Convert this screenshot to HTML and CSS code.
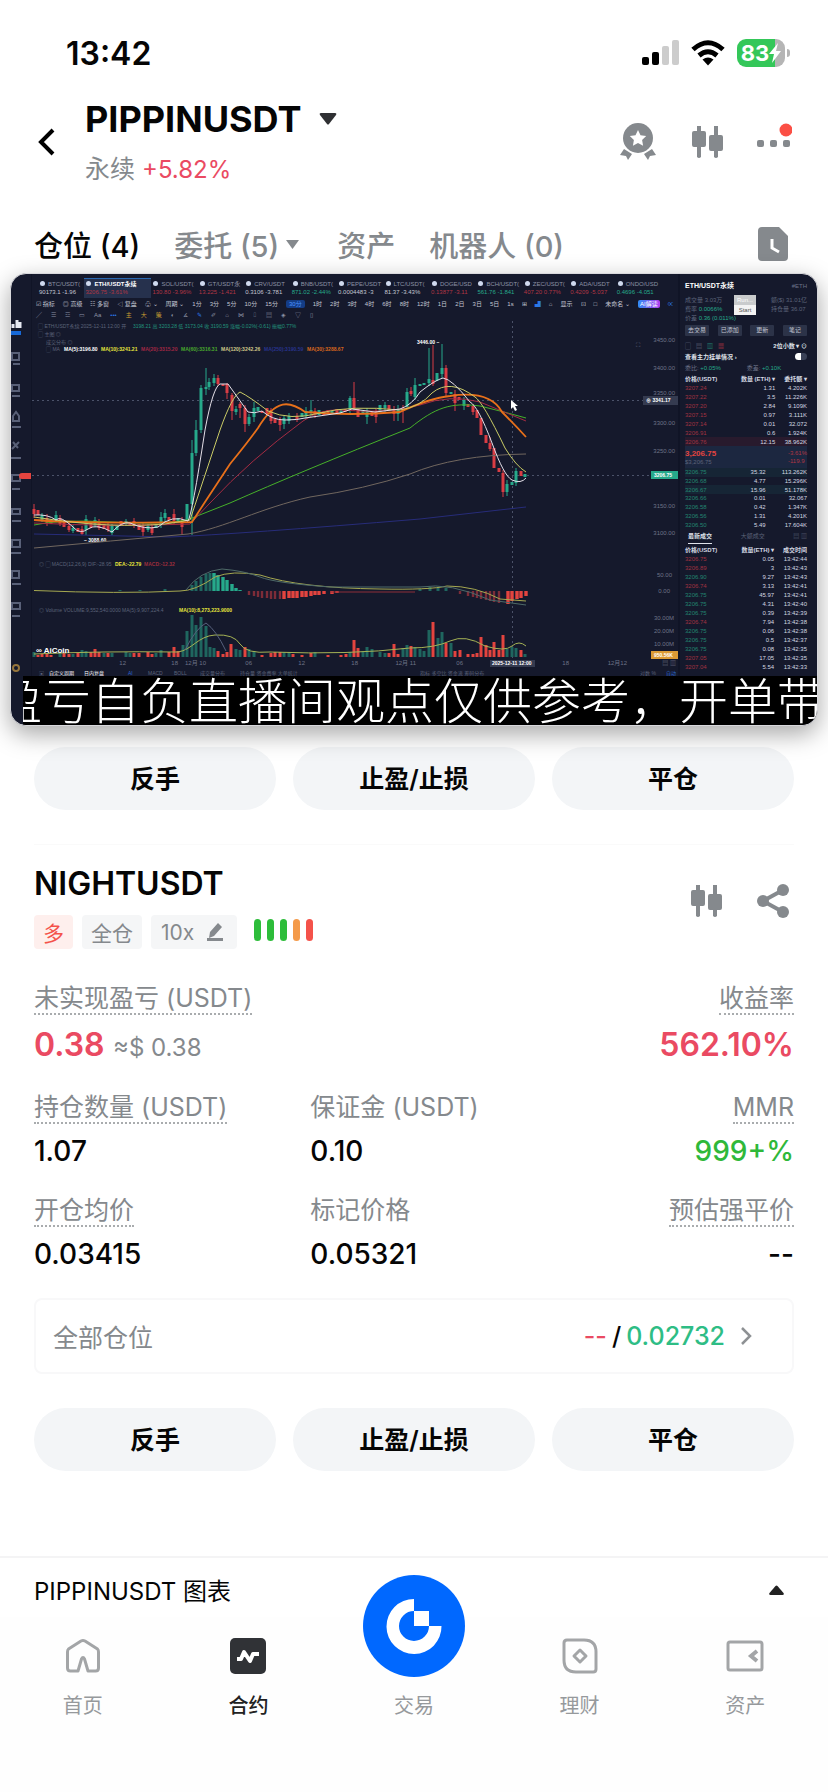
FILE: index.html
```html
<!DOCTYPE html>
<html lang="zh-CN">

<head>
    <meta charset="UTF-8">
    <meta name="viewport" content="width=device-width, initial-scale=1.0">
    <title>PIPPINUSDT</title>
    <link rel="stylesheet" href="styles.css">
</head>

<body>
    <svg class="defs" aria-hidden="true">
        <symbol id="candles" viewBox="0 0 36 36">
            <path d="M9 2h4v5h3q2 0 2 2v12q0 2-2 2h-3v10q-2 2-4 0V23H6q-2 0-2-2V9q0-2 2-2h3zM26 2h4v9h3q2 0 2 2v12q0 2-2 2h-3v6q-2 2-4 0v-6h-3q-2 0-2-2V13q0-2 2-2h3z" fill="#85898d" />
        </symbol>
    </svg>
    <div class="app">
        <div class="status">
            <span class="time">13:42</span>
            <div class="status-icons">
                <svg width="37" height="26" viewBox="0 0 37 26">
                    <rect x="0" y="17" width="7" height="8" rx="2" />
                    <rect x="10" y="12" width="7" height="13" rx="2" />
                    <rect x="20" y="6" width="7" height="19" rx="2" fill="#ccc" />
                    <rect x="30" y="0" width="7" height="25" rx="2" fill="#ccc" />
                </svg>
                <svg width="34" height="26" viewBox="0 0 34 26">
                    <path d="M2 9.500Q17-4 32 9.500M8 15.500Q17 8 26 15.500" fill="none" stroke="#000" stroke-width="5" />
                    <path d="M11.500 19.500Q17 15.500 22.500 19.500L17 25.500z" />
                </svg>
                <div class="battery">
                    <span>83</span>
                    <svg width="12" height="20" viewBox="0 0 12 20">
                        <path d="M9 0L0 11h5L3 20l9-12H7z" fill="#fff" />
                    </svg>
                </div>
            </div>
        </div>

        <header class="header">
            <button type="button" class="icon-btn" aria-label="返回">
                <svg width="20" height="30" viewBox="0 0 20 30">
                    <path d="M17 3L5 15l12 12" fill="none" stroke="#000" stroke-width="4" />
                </svg>
            </button>
            <div class="pair">
                <button type="button" class="pair-name">PIPPINUSDT
                    <svg width="18" height="12" viewBox="0 0 18 12">
                        <path d="M2 0h14q2 0 1 2l-7 9q-1 1-2 0L1 2Q0 0 2 0z" fill="#2f3033" />
                    </svg>
                </button>
                <p class="pair-sub">永续 <span class="red">+5.82%</span></p>
            </div>
            <div class="header-icons">
                <button type="button" class="icon-btn" aria-label="奖章">
                    <svg width="36" height="38" viewBox="0 0 36 38">
                        <circle cx="18" cy="15" r="15" fill="#85898d" />
                        <path d="M18 7l2.500 5.200 5.700.8-4.100 4 1 5.700-5.100-2.700-5.100 2.700 1-5.700-4.100-4 5.700-.8z" fill="#fff" />
                        <path d="M4 26l8 5-4 6-2-4-6-1zM32 26l-8 5 4 6 2-4 6-1z" fill="#85898d" />
                    </svg>
                </button>
                <button type="button" class="icon-btn" aria-label="K线">
                    <svg width="36" height="36"><use href="#candles" /></svg>
                </button>
                <button type="button" class="icon-btn" aria-label="更多">
                    <svg width="36" height="38" viewBox="0 0 36 38">
                        <rect x="1" y="17" width="7" height="7" rx="2" fill="#85898d" />
                        <rect x="14" y="17" width="7" height="7" rx="2" fill="#85898d" />
                        <rect x="27" y="17" width="7" height="7" rx="2" fill="#85898d" />
                        <circle cx="30" cy="7" r="6.500" fill="#fb4f45" />
                    </svg>
                </button>
            </div>
        </header>

        <nav class="tabs">
            <a href="#" class="active">仓位 (4)</a>
            <a href="#" class="orders">委托 (5)
                <svg width="13" height="9" viewBox="0 0 13 9"><path d="M0 0h13L6.500 9z" fill="#85898d" /></svg>
            </a>
            <a href="#">资产</a>
            <a href="#">机器人 (0)</a>
            <button type="button" class="icon-btn history" aria-label="历史">
                <svg width="30" height="34" viewBox="0 0 30 34">
                    <path d="M4 0h17l9 9v21q0 4-4 4H4q-4 0-4-4V4q0-4 4-4z" fill="#85898d" />
                    <path d="M14 12v9l7 4" fill="none" stroke="#fff" stroke-width="3" />
                </svg>
            </button>
        </nav>

        <!-- live stream window -->
        <section class="video">
            <div class="stream">
                <svg class="side" viewBox="0 0 21 402" fill="none" stroke="#596078" stroke-width="2">
                    <path d="M2 54v-4M6 54v-8M9 54v-6" stroke="#e6e9f2" stroke-width="3" />
                    <path d="M0 59h10" stroke="#1769d8" stroke-width="4" />
                    <path d="M1 79h7v7H1zM2 90h7M1 111h7v6H1zM1 122h8M2 142l3-4 3 4v5H2zM1 153h9M1 175l7-7M2 168l5 6M0 184h10M1 201h8v6H1zM1 215h8M1 235h8v5H1zM1 247h9M1 266h8v7H1zM0 279h10M1 297h7v7H1zM1 310h9M1 329h8v6H1zM1 342h8" />
                    <circle cx="5" cy="394" r="3" stroke="#96753c" />
                    <path d="M8 202q0-3 3-3h9v6h-9q-3 0-3-3z" fill="#e4443f" stroke="none" />
                    <path d="M20.500 0v402" stroke="#101426" stroke-width="1" />
                </svg>
                <div class="chart">
                    <div class="coins">
                        <div><b>BTC/USDT(</b><i>90173.1 -1.96</i></div>
                        <div class="on"><b>ETH/USDT永续</b><i class="down">3206.75 -3.61%</i></div>
                        <div><b>SOL/USDT(</b><i class="down">130.80 -3.96%</i></div>
                        <div><b>GT/USDT永</b><i class="down">13.225 -1.421</i></div>
                        <div><b>CRV/USDT</b><i>0.3106 -3.781</i></div>
                        <div><b>BNB/USDT(</b><i class="up">871.02 -2.44%</i></div>
                        <div><b>PEPE/USDT</b><i>0.0004483 -3</i></div>
                        <div><b>LTC/USDT(</b><i>81.37 -3.43%</i></div>
                        <div><b>DOGE/USD</b><i class="down">0.13877 -3.11</i></div>
                        <div><b>BCH/USDT(</b><i class="up">561.76 -1.841</i></div>
                        <div><b>ZEC/USDT(</b><i class="down">407.20 0.77%</i></div>
                        <div><b>ADA/USDT</b><i class="down">0.4209 -5.037</i></div>
                        <div><b>ONDO/USD</b><i class="up">0.4696 -4.051</i></div>
                    </div>
                    <div class="periods">
                        <span>☑ 指标</span><span>◎ 高级</span><span>☷ 多窗</span><span>◁ 复盘</span><span>♧ ⌄</span><span>周期 ⌄</span>
                        <span>1分</span><span>3分</span><span>5分</span><span>10分</span><span>15分</span><span class="cur">30分</span>
                        <span>1时</span><span>2时</span><span>3时</span><span>4时</span><span>6时</span><span>8时</span><span>12时</span>
                        <span>1日</span><span>2日</span><span>3日</span><span>5日</span><span>1s</span><span>⊞</span><span class="blue">▟</span><span>⌂</span>
                        <span>显示</span><span>⊡</span><span>□</span><span>未命名 ⌄</span><span class="ai">AI解读</span><span class="blue">∝</span>
                    </div>
                    <div class="tools">
                        <span>╱</span><span>☰</span><span>☲</span><span>▭</span><span>Aa</span><span class="blue">•••</span>
                        <span class="gold">主</span><span class="gold">大</span><span class="gold">策</span><span>◐</span><span>∡</span>
                        <span class="blue">✎</span><span>✐</span><span>⌂</span><span>⋈</span><span>⌷</span><span>▤</span><span>◈</span><span>▽</span><span>▯</span>
                    </div>
                    <svg class="plot" viewBox="32 321 646 355">
                        <g class="dim">
                            <text x="38" y="328">▢ ETH/USDT永续 2025-12-11 12:00 开</text>
                            <text x="133" y="328" fill="#22947c">3198.21 高 3203.28 低 3173.04 收 3190.59 涨幅-0.02%(-0.61) 振幅0.77%</text>
                            <text x="38" y="336">▢ 主图 ◎</text>
                            <text x="46" y="344">成交分布 ◎</text>
                            <text x="46" y="351">▢ MA</text>
                            <text x="39" y="566">◎ ▢ MACD(12,26,9) DIF:-28.95</text>
                            <text x="39" y="612">◎ Volume VOLUME:9,552,540.0000 MA(5):9,907,224.4</text>
                        </g>
                        <g class="bold">
                            <text x="64" y="351" fill="#fff">MA(5):3196.80</text>
                            <text x="101" y="351" fill="#e5e53c">MA(10):3241.21</text>
                            <text x="141" y="351" fill="#a02744">MA(20):3315.20</text>
                            <text x="181" y="351" fill="#48a82c">MA(60):3316.31</text>
                            <text x="221" y="351" fill="#d1c98a">MA(120):3242.26</text>
                            <text x="264" y="351" fill="#28338c">MA(250):3190.59</text>
                            <text x="307" y="351" fill="#d9671d">MA(30):3288.67</text>
                            <text x="115" y="566" fill="#e5e53c">DEA:-22.79</text>
                            <text x="144" y="566" fill="#9b2d3c">MACD:-12.32</text>
                            <text x="179" y="612" fill="#e5e53c">MA(10):8,273,223.9000</text>
                            <text x="417" y="344" fill="#fff">3446.00 –</text>
                            <text x="84" y="542" fill="#fff">– 3088.60</text>
                        </g>
                        <path class="grid" d="M32 400.500H645M32 475.500H650M512.500 321V662" />

                        <!-- volume -->
                        <path class="vol-g" d="M34 657v-5M60 657v-4M73 657v-3M82 657v-7M86 657v-6M104 657v-4M112 657v-4M126 657v-5M130 657v-4M156 657v-4M161 657v-7M183 657v-12M187 657v-26M192 657v-42M196 657v-32M201 657v-40M206 657v-31M210 657v-10M214 657v-9M236 657v-8M240 657v-7M249 657v-8M254 657v-6M284 657v-5M289 657v-5M315 657v-5M350 657v-5M363 657v-6M367 657v-10M372 657v-8M380 657v-5M385 657v-4M403 657v-9M407 657v-12M415 657v-10M420 657v-8M424 657v-6M429 657v-27M438 657v-19M442 657v-25M451 657v-14M507 657v-8M512 657v-10M516 657v-9M525 657v-3" />
                        <path class="vol-r" d="M38 657v-2M42 657v-3M47 657v-4M51 657v-2M64 657v-4M69 657v-3M78 657v-4M91 657v-5M95 657v-8M99 657v-5M108 657v-4M134 657v-4M139 657v-4M148 657v-5M152 657v-3M169 657v-5M174 657v-10M178 657v-6M218 657v-6M223 657v-3M227 657v-5M231 657v-13M245 657v-10M262 657v-2M271 657v-4M275 657v-5M280 657v-5M293 657v-3M302 657v-2M311 657v-4M328 657v-2M341 657v-2M346 657v-3M354 657v-17M358 657v-9M389 657v-4M394 657v-13M398 657v-3M411 657v-11M433 657v-35M446 657v-14M455 657v-6M460 657v-7M468 657v-3M473 657v-3M477 657v-4M481 657v-20M486 657v-12M490 657v-7M494 657v-15M499 657v-7M503 657v-22M521 657v-7" />
                        <path d="M34 654Q100 651 178 652C192 650 198 636 215 635Q234 634 240 644T270 652Q350 655 410 648Q435 648 450 641T485 646Q505 652 512 646T526 646" fill="none" stroke="#a5b355" />
                        <path d="M185 650Q196 628 206 623Q216 630 226 651" fill="none" stroke="#56607c" />

                        <!-- macd -->
                        <path class="vol-g" d="M192 591v-6M196 591v-10M201 591v-14M206 591v-17M210 591v-18M120 591v-1M140 591v-1M165 591v-2M420 591v-2M430 591v-4M438 591v-4M446 591v-3" />
                        <path d="M214 591v-18M218 591v-16M223 591v-14M227 591v-11M232 591v-7M236 591v-3M240 591v-1" stroke="#26a98b" stroke-width="3.400" />
                        <path d="M249 591v4M254 591v5M258 591v6M262 591v7M267 591v7M271 591v8M275 591v8M280 591v8M460 591v3M468 591v5M473 591v6M477 591v7M481 591v8M486 591v9M490 591v10M494 591v11M499 591v12" stroke="#7c2c38" stroke-width="2.400" />
                        <path d="M284 591v8M289 591v7M293 591v7M297 591v7M302 591v6M306 591v6M311 591v5M315 591v4M319 591v4M324 591v3M332 591v3M337 591v2M508 591v13M512 591v10M517 591v8M521 591v7M526 591v5" stroke="#e3443f" stroke-width="3.400" />
                        <path d="M34 590.500Q120 594 180 591Q195 591 215 577Q232 570 260 575Q300 588 380 589Q430 590 447 586Q475 586 500 599L526 601" fill="none" stroke="#a5a850" />
                        <path d="M186 590Q200 571 222 569Q245 571 260 577T330 587H420Q450 582 490 600L526 605" fill="none" stroke="#4e6a68" />
                        <path d="M330 592H415" stroke="#8e2e38" />

                        <!-- candles -->
                        <path class="wick-g" d="M42 513v9M56 511v11M73 525v8M86 515v20M95 517v10M112 524v11M126 519v7M148 524v8M161 512v16M165 509v13M192 440v95M196 420v36M201 385v48M206 368v27M209 378v12M214 374v12M236 406v9M249 414v12M254 402v20M284 416v13M289 413v11M306 407v12M311 400v16M350 396v18M367 408v16M385 402v10M398 405v16M407 388v20M415 378v22M429 348v38M442 344v34M464 397v13M507 480v16M516 468v18" />
                        <path class="wick-r" d="M34 504v14M47 514v12M60 515v11M69 523v9M82 526v9M99 519v11M108 523v9M134 518v10M143 523v14M152 524v11M174 509v15M182 517v18M218 375v11M227 383v16M232 393v27M240 402v16M245 405v27M271 408v16M280 417v14M297 413v9M315 408v10M354 382v29M376 409v14M394 406v15M403 405v18M411 387v9M433 345v41M446 365v31M455 390v21M473 404v11M490 437v14M503 470v27" />
                        <path class="body-g" d="M42 515v5M56 515v5M73 528v3M86 519v11M95 520v6M112 526v7M117 525v5M126 521v3M148 526v4M156 524v4M161 517v7M165 513v5M178 518v5M187 504v16M192 453v51M196 430v23M201 388v42M206 387v2M209 382v5M214 378v5M236 409v3M249 417v7M254 408v9M258 407v4M284 418v6M289 416v5M302 413v4M306 411v5M311 410v3M319 410v5M332 411v3M341 410v4M350 398v11M363 411v3M367 412v5M380 405v7M385 405v3M398 409v5M407 392v15M415 385v12M420 384v2M424 383v2M429 379v4M437 373v8M442 368v6M451 392v2M464 400v6M507 484v8M512 482v3M516 471v12M525 474v3" />
                        <path class="body-r" d="M34 509v5M38 510v5M47 518v5M51 520v4M60 518v6M64 522v5M69 526v4M78 528v4M82 529v5M91 523v5M99 522v6M104 524v5M108 526v4M121 521v5M130 522v3M134 521v5M139 524v6M143 526v6M152 527v6M169 517v3M174 514v7M182 520v7M218 378v6M223 384v2M227 384v9M232 395v16M240 404v4M245 408v16M262 411v2M267 408v6M271 410v11M275 419v4M280 420v5M297 416v3M315 411v4M324 411v4M328 410v4M337 409v4M345 409v3M354 398v10M358 409v8M372 412v4M376 411v6M389 405v5M394 409v5M403 408v3M411 391v3M433 380v4M446 368v25M455 394v9M459 397v3M468 404v3M473 406v6M477 410v8M481 418v17M486 435v8M490 443v6M494 448v20M499 468v4M503 473v19M521 471v5" />

                        <!-- moving averages -->
                        <g class="ma">
                            <path d="M34 534L170 537Q240 534 420 519L526 507" stroke="#272c79" />
                            <path d="M34 548Q110 541 188 534C225 528 260 508 310 497Q365 489 410 474Q455 455 526 454" stroke="#71675f" />
                            <path d="M34 525Q60 519 110 522T187 520L230 503Q300 472 410 428C435 408 450 402 480 406Q505 412 526 418" stroke="#46b02a" />
                            <path d="M34 523Q110 527 190 524L210 503Q250 460 303 421Q320 409 340 410Q390 414 420 405Q450 394 480 402L526 421" stroke="#a52c43" />
                            <path d="M34 520Q90 524 192 522L205 502L230 464Q248 442 258 428C276 398 290 401 305 412Q350 416 400 412Q430 398 450 396Q490 390 502 412Q516 426 526 437" stroke="#e8701a" stroke-width="1.800" />
                            <path d="M34 517Q80 524 110 525T165 524Q184 521 190 520L220 430Q232 396 240 392Q250 397 268 411Q290 421 320 413T400 410Q420 407 432 393Q450 378 475 397Q483 402 505 448Q516 466 526 472" stroke="#c9cb66" />
                            <path d="M34 515Q48 514 56 520Q60 515 73 527Q80 535 88 529T112 532Q122 521 130 523Q145 530 158 527Q172 514 188 521Q192 515 205 430Q213 387 220 384H228Q238 398 248 412Q254 414 262 411Q272 420 285 420T305 418L340 413L352 409L375 412L400 409Q412 405 420 392Q435 380 443 378Q452 379 470 402Q478 406 492 443Q504 476 512 480Q521 484 526 478" stroke="#e4dfe8" />
                        </g>

                        <path d="M511 400v9l2-2 2 4 2-1-2-4h3z" fill="#fff" />
                        <g class="scale">
                            <text x="675" y="342">3450.00</text>
                            <text x="675" y="370">3400.00</text>
                            <text x="675" y="395">3350.00</text>
                            <text x="675" y="425">3300.00</text>
                            <text x="675" y="453">3250.00</text>
                            <text x="675" y="508">3150.00</text>
                            <text x="675" y="535">3100.00</text>
                            <text x="672" y="577">50.00</text>
                            <text x="670" y="593">0.00</text>
                            <text x="674" y="620">30.00M</text>
                            <text x="674" y="633">20.00M</text>
                            <text x="674" y="646">10.00M</text>
                            <text x="126" y="665">12</text>
                            <text x="178" y="665">18</text>
                            <text x="206" y="665">12月 10</text>
                            <text x="252" y="665">06</text>
                            <text x="305" y="665">12</text>
                            <text x="358" y="665">18</text>
                            <text x="416" y="665">12月 11</text>
                            <text x="463" y="665">06</text>
                            <text x="569" y="665">18</text>
                            <text x="627" y="665">12月12</text>
                            <text x="676" y="665">▤ ▥</text>
                            <text x="640" y="347">⛶</text>
                        </g>
                        <rect x="643" y="396" width="35" height="9" fill="#353b50" />
                        <rect x="651" y="471" width="27" height="8" fill="#26a98b" />
                        <rect x="651" y="651" width="27" height="8" fill="#dc9b35" />
                        <rect x="490" y="660" width="45" height="7" fill="#353b50" />
                        <g class="bold" fill="#fff">
                            <text x="646" y="402">⊕ 3341.17</text>
                            <text x="654" y="477">3206.75</text>
                            <text x="654" y="657">950.56K</text>
                            <text x="492" y="665">2025-12-11 12:00</text>
                        </g>
                        <text x="36" y="653" class="coin-logo">∞ AiCoin</text>
                        <g class="dim">
                            <text x="39" y="675">▣</text>
                            <text x="49" y="675" fill="#fff">自定义周期</text>
                            <text x="84" y="675" fill="#fff">日内复盘</text>
                            <text x="128" y="675" fill="#2b67cf">AI</text>
                            <text x="148" y="675">MACD</text>
                            <text x="174" y="675">BOLL</text>
                            <text x="200" y="675">成交量分布</text>
                            <text x="240" y="675">持仓量 资金费率 大单统计</text>
                            <text x="420" y="675">指标 多空比 资金流 筹码分布</text>
                            <text x="640" y="675">对数 %</text>
                            <text x="666" y="675" fill="#2b67cf">自动</text>
                        </g>
                    </svg>
                </div>

                <div class="book">
                    <div class="book-title"><b>ETH/USDT永续</b><span>#ETH</span></div>
                    <div class="book-info">
                        <span>成交量 3.03万</span><span>额($) 31.01亿</span>
                        <span>费率 <em class="up">0.0066%</em></span><span>持仓量 36.07</span>
                        <span>价差 <em class="up">0.36 (0.011%)</em></span>
                        <div class="popup"><span>Run...</span><span>Start</span></div>
                    </div>
                    <div class="book-btns"><span>去交易</span><span>已添加</span><span>更新</span><span>笔记</span></div>
                    <div class="book-line"><span>▢ &nbsp; ▤ &nbsp; <em class="up">▥</em> &nbsp; <em class="down">▦</em></span><b>2位小数 ▾ ⊙</b></div>
                    <div class="book-line"><b>查看主力挂单情况 ›</b><span class="toggle"></span></div>
                    <div class="book-line"><span>委比: <em class="up">+0.05%</em></span><span>委差: <em class="up">+0.10K</em></span><span></span></div>
                    <table class="asks">
                        <tr><th>价格(USDT)</th><th>数量 (ETH) ▾</th><th>委托额 ▾</th></tr>
                        <tr><td>3207.24</td><td>1.31</td><td>4.202K</td></tr>
                        <tr><td>3207.22</td><td>3.5</td><td>11.226K</td></tr>
                        <tr><td>3207.20</td><td>2.84</td><td>9.109K</td></tr>
                        <tr><td>3207.15</td><td>0.97</td><td>3.111K</td></tr>
                        <tr><td>3207.14</td><td>0.01</td><td>32.072</td></tr>
                        <tr><td>3206.91</td><td>0.6</td><td>1.924K</td></tr>
                        <tr class="hot"><td>3206.76</td><td>12.15</td><td>38.962K</td></tr>
                    </table>
                    <div class="last">
                        <div><strong>3,206.75</strong><span>$3,206.75</span></div>
                        <div><span class="down">-3.61%</span><span class="down">-119.9</span></div>
                    </div>
                    <table class="bids">
                        <tr class="cool"><td>3206.75</td><td>35.32</td><td>113.262K</td></tr>
                        <tr><td>3206.68</td><td>4.77</td><td>15.296K</td></tr>
                        <tr class="cool"><td>3206.67</td><td>15.96</td><td>51.178K</td></tr>
                        <tr><td>3206.66</td><td>0.01</td><td>32.067</td></tr>
                        <tr><td>3206.58</td><td>0.42</td><td>1.347K</td></tr>
                        <tr><td>3206.56</td><td>1.31</td><td>4.201K</td></tr>
                        <tr><td>3206.50</td><td>5.49</td><td>17.604K</td></tr>
                    </table>
                    <div class="book-tabs"><b>最新成交</b><span>大额成交</span><span>▤ ▥</span></div>
                    <table class="trades">
                        <tr><th>价格(USDT)</th><th>数量(ETH) ▾</th><th>成交时间</th></tr>
                        <tr><td class="down">3206.75</td><td>0.05</td><td>13:42:44</td></tr>
                        <tr><td class="down">3206.89</td><td>3</td><td>13:42:43</td></tr>
                        <tr><td>3206.90</td><td>9.27</td><td>13:42:43</td></tr>
                        <tr><td class="down">3206.74</td><td>3.13</td><td>13:42:41</td></tr>
                        <tr><td>3206.75</td><td>45.97</td><td>13:42:41</td></tr>
                        <tr><td>3206.75</td><td>4.31</td><td>13:42:40</td></tr>
                        <tr><td>3206.75</td><td>0.39</td><td>13:42:39</td></tr>
                        <tr><td class="down">3206.74</td><td>7.94</td><td>13:42:38</td></tr>
                        <tr><td>3206.75</td><td>0.06</td><td>13:42:38</td></tr>
                        <tr><td>3206.75</td><td>0.5</td><td>13:42:37</td></tr>
                        <tr><td>3206.75</td><td>0.08</td><td>13:42:35</td></tr>
                        <tr><td class="down">3207.05</td><td>17.05</td><td>13:42:35</td></tr>
                        <tr><td class="down">3207.04</td><td>5.54</td><td>13:42:33</td></tr>
                    </table>
                </div>
            </div>
            <div class="ticker">盈亏自负直播间观点仅供参考，开单带</div>
        </section>

        <main class="content">
            <div class="actions">
                <button type="button">反手</button>
                <button type="button">止盈/止损</button>
                <button type="button">平仓</button>
            </div>

            <article class="position">
                <div class="pos-head">
                    <div>
                        <h2>NIGHTUSDT</h2>
                        <div class="tags">
                            <span class="tag long">多</span>
                            <span class="tag">全仓</span>
                            <button type="button" class="tag">10x
                                <svg width="18" height="18" viewBox="0 0 18 18">
                                    <path d="M12 0l4 4-8 9-5 2 1-6zM9 15h8v3H1v-3z" fill="#85898d" />
                                </svg>
                            </button>
                            <div class="risk"><i></i><i></i><i></i><i class="orange"></i><i class="hot"></i></div>
                        </div>
                    </div>
                    <div class="pos-icons">
                        <button type="button" class="icon-btn" aria-label="K线">
                            <svg width="36" height="36"><use href="#candles" /></svg>
                        </button>
                        <button type="button" class="icon-btn" aria-label="分享">
                            <svg width="36" height="36" viewBox="0 0 36 36">
                                <path d="M28 7L8 18l20 11" fill="none" stroke="#85898d" stroke-width="4" />
                                <circle cx="28" cy="7" r="6" fill="#85898d" />
                                <circle cx="8" cy="18" r="6" fill="#85898d" />
                                <circle cx="28" cy="29" r="6" fill="#85898d" />
                            </svg>
                        </button>
                    </div>
                </div>

                <div class="stats two">
                    <div>
                        <span class="label dotted">未实现盈亏 (USDT)</span>
                        <p class="big"><b>0.38</b> <span>≈$ 0.38</span></p>
                    </div>
                    <div class="end">
                        <span class="label dotted">收益率</span>
                        <p class="big"><b>562.10%</b></p>
                    </div>
                </div>
                <div class="stats">
                    <div>
                        <span class="label dotted">持仓数量 (USDT)</span>
                        <p>1.07</p>
                    </div>
                    <div>
                        <span class="label">保证金 (USDT)</span>
                        <p>0.10</p>
                    </div>
                    <div class="end">
                        <span class="label dotted">MMR</span>
                        <p class="green">999+%</p>
                    </div>
                    <div>
                        <span class="label dotted">开仓均价</span>
                        <p>0.03415</p>
                    </div>
                    <div>
                        <span class="label">标记价格</span>
                        <p>0.05321</p>
                    </div>
                    <div class="end">
                        <span class="label dotted">预估强平价</span>
                        <p>--</p>
                    </div>
                </div>

                <a href="#" class="tpsl">
                    <span>全部仓位</span>
                    <span class="tpsl-value"><em class="red">--</em> / <em class="teal">0.02732</em>
                        <svg width="12" height="18" viewBox="0 0 12 18"><path d="M2 1l8 8-8 8" fill="none" stroke="#8e9194" stroke-width="2.500" /></svg>
                    </span>
                </a>

                <div class="actions">
                    <button type="button">反手</button>
                    <button type="button">止盈/止损</button>
                    <button type="button">平仓</button>
                </div>
            </article>
        </main>

        <footer class="bottom">
            <button type="button" class="chart-bar">
                <span>PIPPINUSDT 图表</span>
                <svg width="15" height="10" viewBox="0 0 15 10"><path d="M6.500 1q1-1 2 0l6 7q1 2-1 2h-12q-2 0-1-2z" fill="#222" /></svg>
            </button>
            <nav class="nav">
                <a href="#">
                    <svg width="36" height="36" viewBox="0 0 36 36">
                        <path d="M2.500 14q0-2 1-3L16 3q2-1 4 0l12.500 8q1 1 1 3v16q0 3-3 3h-7.500L19.500 21q-1.500-3-3 0L13 33H5.500q-3 0-3-3z" fill="none" stroke="#a3a5a7" stroke-width="3" stroke-linejoin="round" />
                    </svg>
                    首页
                </a>
                <a href="#" class="active">
                    <svg width="36" height="36" viewBox="0 0 36 36">
                        <rect width="36" height="36" rx="5" fill="#303236" />
                        <path d="M7 21h4l3-7 6 9 3-7h6" fill="none" stroke="#fff" stroke-width="4" stroke-linejoin="round" />
                    </svg>
                    合约
                </a>
                <a href="#" class="trade">
                    <svg width="102" height="102" viewBox="0 0 102 102">
                        <circle cx="51" cy="51" r="51" fill="#0068ff" />
                        <path d="M51 24A27.500 27.500 0 1 0 78.500 51H66A15 15 0 1 1 51 36z" fill="#fff" />
                        <rect x="51" y="36" width="15" height="15" fill="#fff" />
                    </svg>
                    交易
                </a>
                <a href="#">
                    <svg width="36" height="36" viewBox="0 0 36 36" fill="none" stroke="#a3a5a7" stroke-width="3">
                        <path d="M5 2h17q12 0 12 12v17q0 3-3 3H14Q2 34 2 22V5q0-3 3-3zM18 12l6 6-6 6-6-6z" stroke-linejoin="round" />
                    </svg>
                    理财
                </a>
                <a href="#">
                    <svg width="38" height="36" viewBox="0 0 38 36" fill="none" stroke="#a3a5a7" stroke-width="3">
                        <rect x="2" y="4" width="34" height="28" rx="2" />
                        <path d="M31 13l-6 5 6 5" stroke-width="4" />
                    </svg>
                    资产
                </a>
            </nav>
        </footer>
    </div>
</body>

</html>
```
FILE: styles.css
```css
* {
    box-sizing: border-box;
}

body {
    margin: 0;
    background: #fff;
    color: #050505;
    font-family: Inter, "Noto Sans CJK SC", sans-serif;
    font-size: 25px;
}

p,
h2 {
    margin: 0;
}

em,
i {
    font-style: normal;
}

a {
    color: inherit;
    text-decoration: none;
}

button {
    border: none;
    padding: 0;
    background: none;
    color: inherit;
    font: inherit;
    cursor: pointer;
}

svg {
    display: block;
}

.defs {
    display: none;
}

.red {
    color: #ea4a62;
}

.green {
    color: #2fb83a;
}

.teal {
    color: #2ebd85;
}

.app {
    display: flex;
    flex-direction: column;
    min-height: 100vh;
}

.icon-btn {
    display: flex;
}

/* status bar */
.status {
    display: flex;
    justify-content: space-between;
    align-items: center;
    height: 102px;
    padding: 4px 43px 0 66px;
}

.time {
    font-size: 32px;
    font-weight: 600;
}

.status-icons {
    display: flex;
    align-items: center;
    gap: 12px;
}

.battery {
    display: flex;
    align-items: center;
    justify-content: center;
    position: relative;
    width: 48px;
    height: 28px;
    border-radius: 9px;
    background: linear-gradient(90deg, #34c759 80%, #b5b5b5 80%);
    color: #fff;
    font-size: 22px;
    font-weight: 700;
}

.battery::after {
    content: "";
    position: absolute;
    right: -5px;
    width: 3px;
    height: 8px;
    border-radius: 0 4px 4px 0;
    background: #b5b5b5;
}

/* header */
.header {
    display: flex;
    align-items: center;
    height: 80px;
    padding: 0 36px 0 36px;
}

.pair {
    flex: 1;
    padding-left: 29px;
}

.pair-name {
    display: flex;
    align-items: center;
    gap: 18px;
    font-size: 36px;
    font-weight: 700;
    line-height: 44px;
}

.pair-sub {
    margin-top: 10px;
    color: #85898d;
    font-size: 25px;
    line-height: 36px;
}

.pair-sub .red {
    font-size: 24px;
}

.header-icons,
.pos-icons {
    display: flex;
    align-items: center;
    gap: 32px;
}

/* tabs */
.tabs {
    display: flex;
    align-items: center;
    gap: 34px;
    height: 90px;
    padding: 34px 40px 0 34px;
    color: #85898d;
    font-size: 29px;
    font-weight: 500;
}

.tabs a {
    display: flex;
    align-items: center;
    gap: 7px;
}

.tabs .active {
    color: #050505;
}

.tabs .orders {
    padding-right: 4px;
}

.history {
    margin-left: auto;
}

/* stream window */
.video {
    position: relative;
    margin: 1px 10px 0;
    border: 1px solid #d8d8dc;
    border-radius: 16px;
    overflow: hidden;
    background: #15192c;
    box-shadow: 0 8px 24px rgba(0, 0, 0, 0.35);
    color: #c3c7d3;
    font-family: "Liberation Sans", "Noto Sans CJK SC", sans-serif;
    font-size: 6px;
    line-height: 8px;
}

.stream {
    display: flex;
    height: 402px;
}

.side {
    width: 21px;
    height: 402px;
}

.chart {
    flex: 1;
    min-width: 0;
    padding-top: 4px;
}

.up {
    color: #26a98b;
}

.down {
    color: #b03644;
}

.coins {
    display: flex;
    height: 20px;
    padding: 0 16px 0 6px;
    white-space: nowrap;
}

.coins div {
    flex: 1;
    overflow: hidden;
    padding: 2px 0 0 1px;
}

.coins b,
.coins i {
    display: block;
}

.coins b {
    color: #8d93a5;
    font-weight: 400;
}

.coins b::before {
    content: "";
    display: inline-block;
    width: 5px;
    height: 5px;
    margin: 0 3px 0 1px;
    border-radius: 50%;
    background: #cfd9ee;
}

.coins .on {
    flex: 0 0 67px;
    border-top: 1px solid #2a67b0;
    padding-top: 1px;
    background: #26314d;
}

.coins .on b {
    color: #fff;
    font-weight: 700;
}

.periods,
.tools {
    display: flex;
    justify-content: space-between;
    align-items: center;
    height: 11px;
    padding: 0 4px;
    white-space: nowrap;
}

.tools {
    justify-content: flex-start;
    gap: 9px;
    height: 12px;
    color: #8d93a5;
}

.periods .cur {
    padding: 0 3px;
    border-radius: 2px;
    background: #143d86;
    color: #4d95ff;
}

.periods .ai {
    padding: 0 2px;
    border-radius: 2px;
    background: linear-gradient(90deg, #2f8cf5, #b43df0);
    color: #fff;
}

.blue {
    color: #2b78e4;
}

.gold {
    color: #c99f32;
}

.plot {
    width: 100%;
    font-size: 6px;
}

.plot .dim {
    fill: #5c6379;
    font-size: 5px;
}

.plot .bold {
    font-size: 5px;
    font-weight: 700;
}

.plot .scale {
    fill: #6d7388;
    font-size: 6px;
    text-anchor: end;
}

.coin-logo {
    fill: #fff;
    font-size: 8px;
    font-weight: 700;
}

.grid {
    stroke: #4b5269;
    stroke-dasharray: 2 3;
}

.wick-g,
.body-g {
    stroke: #26a98b;
}

.wick-r,
.body-r {
    stroke: #d93d44;
}

.body-g,
.body-r,
.vol-r {
    stroke-width: 3;
}

.vol-r {
    stroke: #e3443f;
}

.vol-g {
    stroke: #1f665f;
    stroke-width: 3;
}

.ma {
    fill: none;
    stroke-width: 1;
}

.book {
    display: flex;
    flex-direction: column;
    width: 139px;
    padding: 8px 10px 0 5px;
    border-left: 2px solid #101426;
    white-space: nowrap;
    overflow: hidden;
}

.book-title,
.book-line,
.book-btns,
.book-tabs,
.last {
    display: flex;
    justify-content: space-between;
}

.book-title {
    margin-bottom: 6px;
    color: #6d7388;
    font-size: 6px;
}

.book-title b {
    color: #fff;
    font-size: 7px;
}

.book-info {
    display: grid;
    grid-template-columns: 1fr auto;
    position: relative;
    row-gap: 1px;
    color: #5c6379;
}

.popup {
    display: flex;
    flex-direction: column;
    position: absolute;
    top: -1px;
    left: 49px;
    width: 22px;
    background: #f3f3f3;
    color: #555;
    text-align: center;
}

.popup span:first-child {
    background: #c9cbcc;
    color: #fff;
}

.popup span {
    line-height: 10px;
}

.book-btns {
    margin: 3px 0 6px;
}

.book-btns span {
    width: 24px;
    border-radius: 1px;
    background: #2c3348;
    line-height: 11px;
    text-align: center;
}

.book-line {
    margin-bottom: 3px;
    color: #6d7388;
}

.book-line b,
.book-tabs b {
    color: #dfe2ea;
}

.toggle {
    width: 12px;
    height: 7px;
    border-left: 6px solid #fff;
    border-radius: 4px;
    background: #3a4157;
}

.book table {
    width: 100%;
    border-collapse: collapse;
    font-size: 6px;
    line-height: 8px;
}

.asks {
    height: 71px;
}

.bids {
    height: 61px;
}

.trades {
    height: 126px;
}

.book th,
.book td {
    padding: 0;
    color: #d4d8e2;
    text-align: right;
}

.book th:nth-child(2),
.book td:nth-child(2) {
    width: 45px;
}

.book th:first-child,
.book td:first-child {
    text-align: left;
}

.book td:first-child {
    color: #238570;
}

.asks td:first-child,
.book td.down:first-child {
    color: #a13241;
}

.asks .hot {
    background: #281a2d;
}

.bids .cool {
    background: #162535;
}

.last {
    height: 22px;
    padding-top: 3px;
    background: #1c2740;
}

.last div {
    display: flex;
    flex-direction: column;
    color: #5c6379;
}

.last strong {
    color: #e3443f;
    font-size: 8px;
    line-height: 9px;
}

.book-tabs {
    height: 15px;
    margin-bottom: 1px;
    padding: 3px 0 0 3px;
    color: #5c6379;
}

.book-tabs b {
    border-bottom: 1px solid #dfe2ea;
}

.ticker {
    height: 49px;
    margin-left: 12px;
    overflow: hidden;
    background: #000;
    color: #fff;
    font-family: "Noto Sans CJK SC", sans-serif;
    font-size: 49px;
    font-weight: 300;
    line-height: 44px;
    text-indent: -30px;
    white-space: nowrap;
}

/* positions */
.content {
    flex: 1;
    padding: 21px 34px 0;
}

.actions {
    display: grid;
    grid-template-columns: repeat(3, 1fr);
    gap: 17px;
}

.actions button {
    height: 63px;
    padding-bottom: 3px;
    border-radius: 32px;
    background: #f3f5f7;
    font-weight: 600;
}

.position {
    margin-top: 34px;
    padding-top: 19px;
    border-top: 1px solid #fafafa;
}

.pos-head {
    display: flex;
    justify-content: space-between;
    padding-right: 3px;
}

.pos-icons {
    padding-bottom: 12px;
}

h2 {
    font-size: 32px;
    font-weight: 600;
    line-height: 40px;
}

.tags {
    display: flex;
    align-items: center;
    gap: 9px;
    margin-top: 11px;
}

.tag {
    display: flex;
    align-items: center;
    gap: 12px;
    height: 34px;
    padding: 0 9px;
    border-radius: 4px;
    background: #f5f6f7;
    color: #85898d;
    font-size: 21px;
}

button.tag {
    padding: 0 13px 0 10px;
}

.tag.long {
    background: #feefed;
    color: #f4524a;
}

.risk {
    display: flex;
    gap: 6px;
    margin: 0 0 5px 8px;
}

.risk i {
    width: 7px;
    height: 22px;
    border-radius: 4px;
    background: #2dbd3a;
}

.risk .orange {
    background: #f49a4a;
}

.risk .hot {
    background: #f4524a;
}

.stats {
    display: grid;
    grid-template-columns: 4fr 4fr 3fr;
    row-gap: 26px;
    margin-top: 26px;
}

.stats.two {
    grid-template-columns: 1fr auto;
    margin-top: 34px;
}

.label {
    display: inline-block;
    border-bottom: 2px solid transparent;
    color: #85898d;
    font-size: 25px;
    line-height: 30px;
}

.label.dotted {
    border-bottom: 2px dotted #a9acae;
}

.stats p {
    margin-top: 9px;
    font-size: 28px;
    font-weight: 500;
    line-height: 36px;
}

.stats .big {
    margin-top: 12px;
    color: #ea4a62;
    font-size: 32px;
}

.big b {
    font-weight: 600;
}

.big span {
    color: #85898d;
    font-size: 24px;
    font-weight: 400;
}

.end {
    text-align: right;
}

.tpsl {
    display: flex;
    justify-content: space-between;
    align-items: center;
    height: 76px;
    margin: 26px 0 34px;
    padding: 0 40px 0 17px;
    border: 2px solid #f8f8f9;
    border-radius: 8px;
    color: #85898d;
}

.tpsl-value {
    display: flex;
    align-items: center;
    gap: 5px;
    color: #050505;
    font-weight: 500;
}

.tpsl-value svg {
    margin-left: 10px;
}

/* bottom */
.chart-bar {
    display: flex;
    justify-content: space-between;
    align-items: center;
    width: 100%;
    height: 61px;
    padding: 4px 44px 0 34px;
    border-top: 2px solid #f4f4f5;
    font-size: 24px;
}

.nav {
    display: grid;
    grid-template-columns: repeat(5, 1fr);
    height: 175px;
    background: #fefefe;
}

.nav a {
    display: flex;
    flex-direction: column;
    align-items: center;
    gap: 17px;
    padding-top: 21px;
    color: #96999c;
    font-size: 20px;
    line-height: 30px;
}

.nav .active {
    color: #222;
    font-weight: 500;
}

/* the round button rises above the bar */
.nav .trade {
    gap: 14px;
    margin-top: -42px;
    padding-top: 0;
}
```
